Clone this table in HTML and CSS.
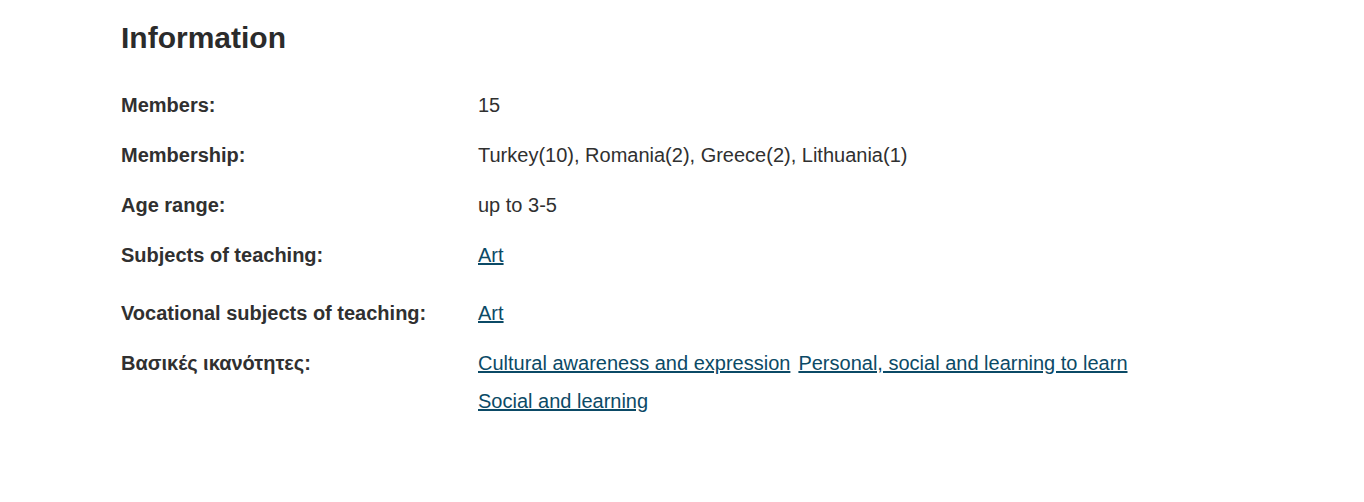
FILE: index.html
```html
<!DOCTYPE html>
<html lang="en">
<head>
<meta charset="utf-8">
<title>Information</title>
<link rel="stylesheet" href="styles.css">
</head>
<body>
<section class="info">
  <h2 class="info-title">Information</h2>
  <dl class="info-list">
    <div class="info-row">
      <dt class="info-label">Members:</dt>
      <dd class="info-value">15</dd>
    </div>
    <div class="info-row">
      <dt class="info-label">Membership:</dt>
      <dd class="info-value">Turkey(10), Romania(2), Greece(2), Lithuania(1)</dd>
    </div>
    <div class="info-row">
      <dt class="info-label">Age range:</dt>
      <dd class="info-value">up to 3-5</dd>
    </div>
    <div class="info-row info-row-extra">
      <dt class="info-label">Subjects of teaching:</dt>
      <dd class="info-value"><ul class="tags"><li><a href="#">Art</a></li></ul></dd>
    </div>
    <div class="info-row">
      <dt class="info-label">Vocational subjects of teaching:</dt>
      <dd class="info-value"><ul class="tags"><li><a href="#">Art</a></li></ul></dd>
    </div>
    <div class="info-row">
      <dt class="info-label">Βασικές ικανότητες:</dt>
      <dd class="info-value">
        <ul class="tags">
          <li><a href="#">Cultural awareness and expression</a></li>
          <li><a href="#">Personal, social and learning to learn</a></li>
          <li><a href="#">Social and learning</a></li>
        </ul>
      </dd>
    </div>
  </dl>
</section>
</body>
</html>
```

FILE: styles.css
```css
html, body {
  margin: 0;
  padding: 0;
  background: #ffffff;
}

body {
  font-family: "Liberation Sans", Arial, sans-serif;
  color: #303030;
  font-size: 20px;
}

.info {
  padding: 20px 121px 0 121px;
}

.info-title {
  margin: 0;
  font-size: 30px;
  line-height: 36px;
  font-weight: 700;
  color: #2b2b2b;
}

.info-list {
  margin: 37px 0 0 0;
  display: flex;
  flex-direction: column;
  gap: 26px;
}

.info-row {
  display: grid;
  grid-template-columns: 357px 1fr;
  line-height: 24px;
}

.info-row-extra {
  margin-bottom: 8px;
}

.info-label {
  margin: 0;
  font-weight: 700;
}

.info-value {
  margin: 0;
}

.tags {
  list-style: none;
  margin: 0;
  padding: 0;
  display: flex;
  flex-wrap: wrap;
  column-gap: 8px;
  row-gap: 14px;
}

.tags a {
  color: #0b4a66;
  text-decoration: underline;
}
```
